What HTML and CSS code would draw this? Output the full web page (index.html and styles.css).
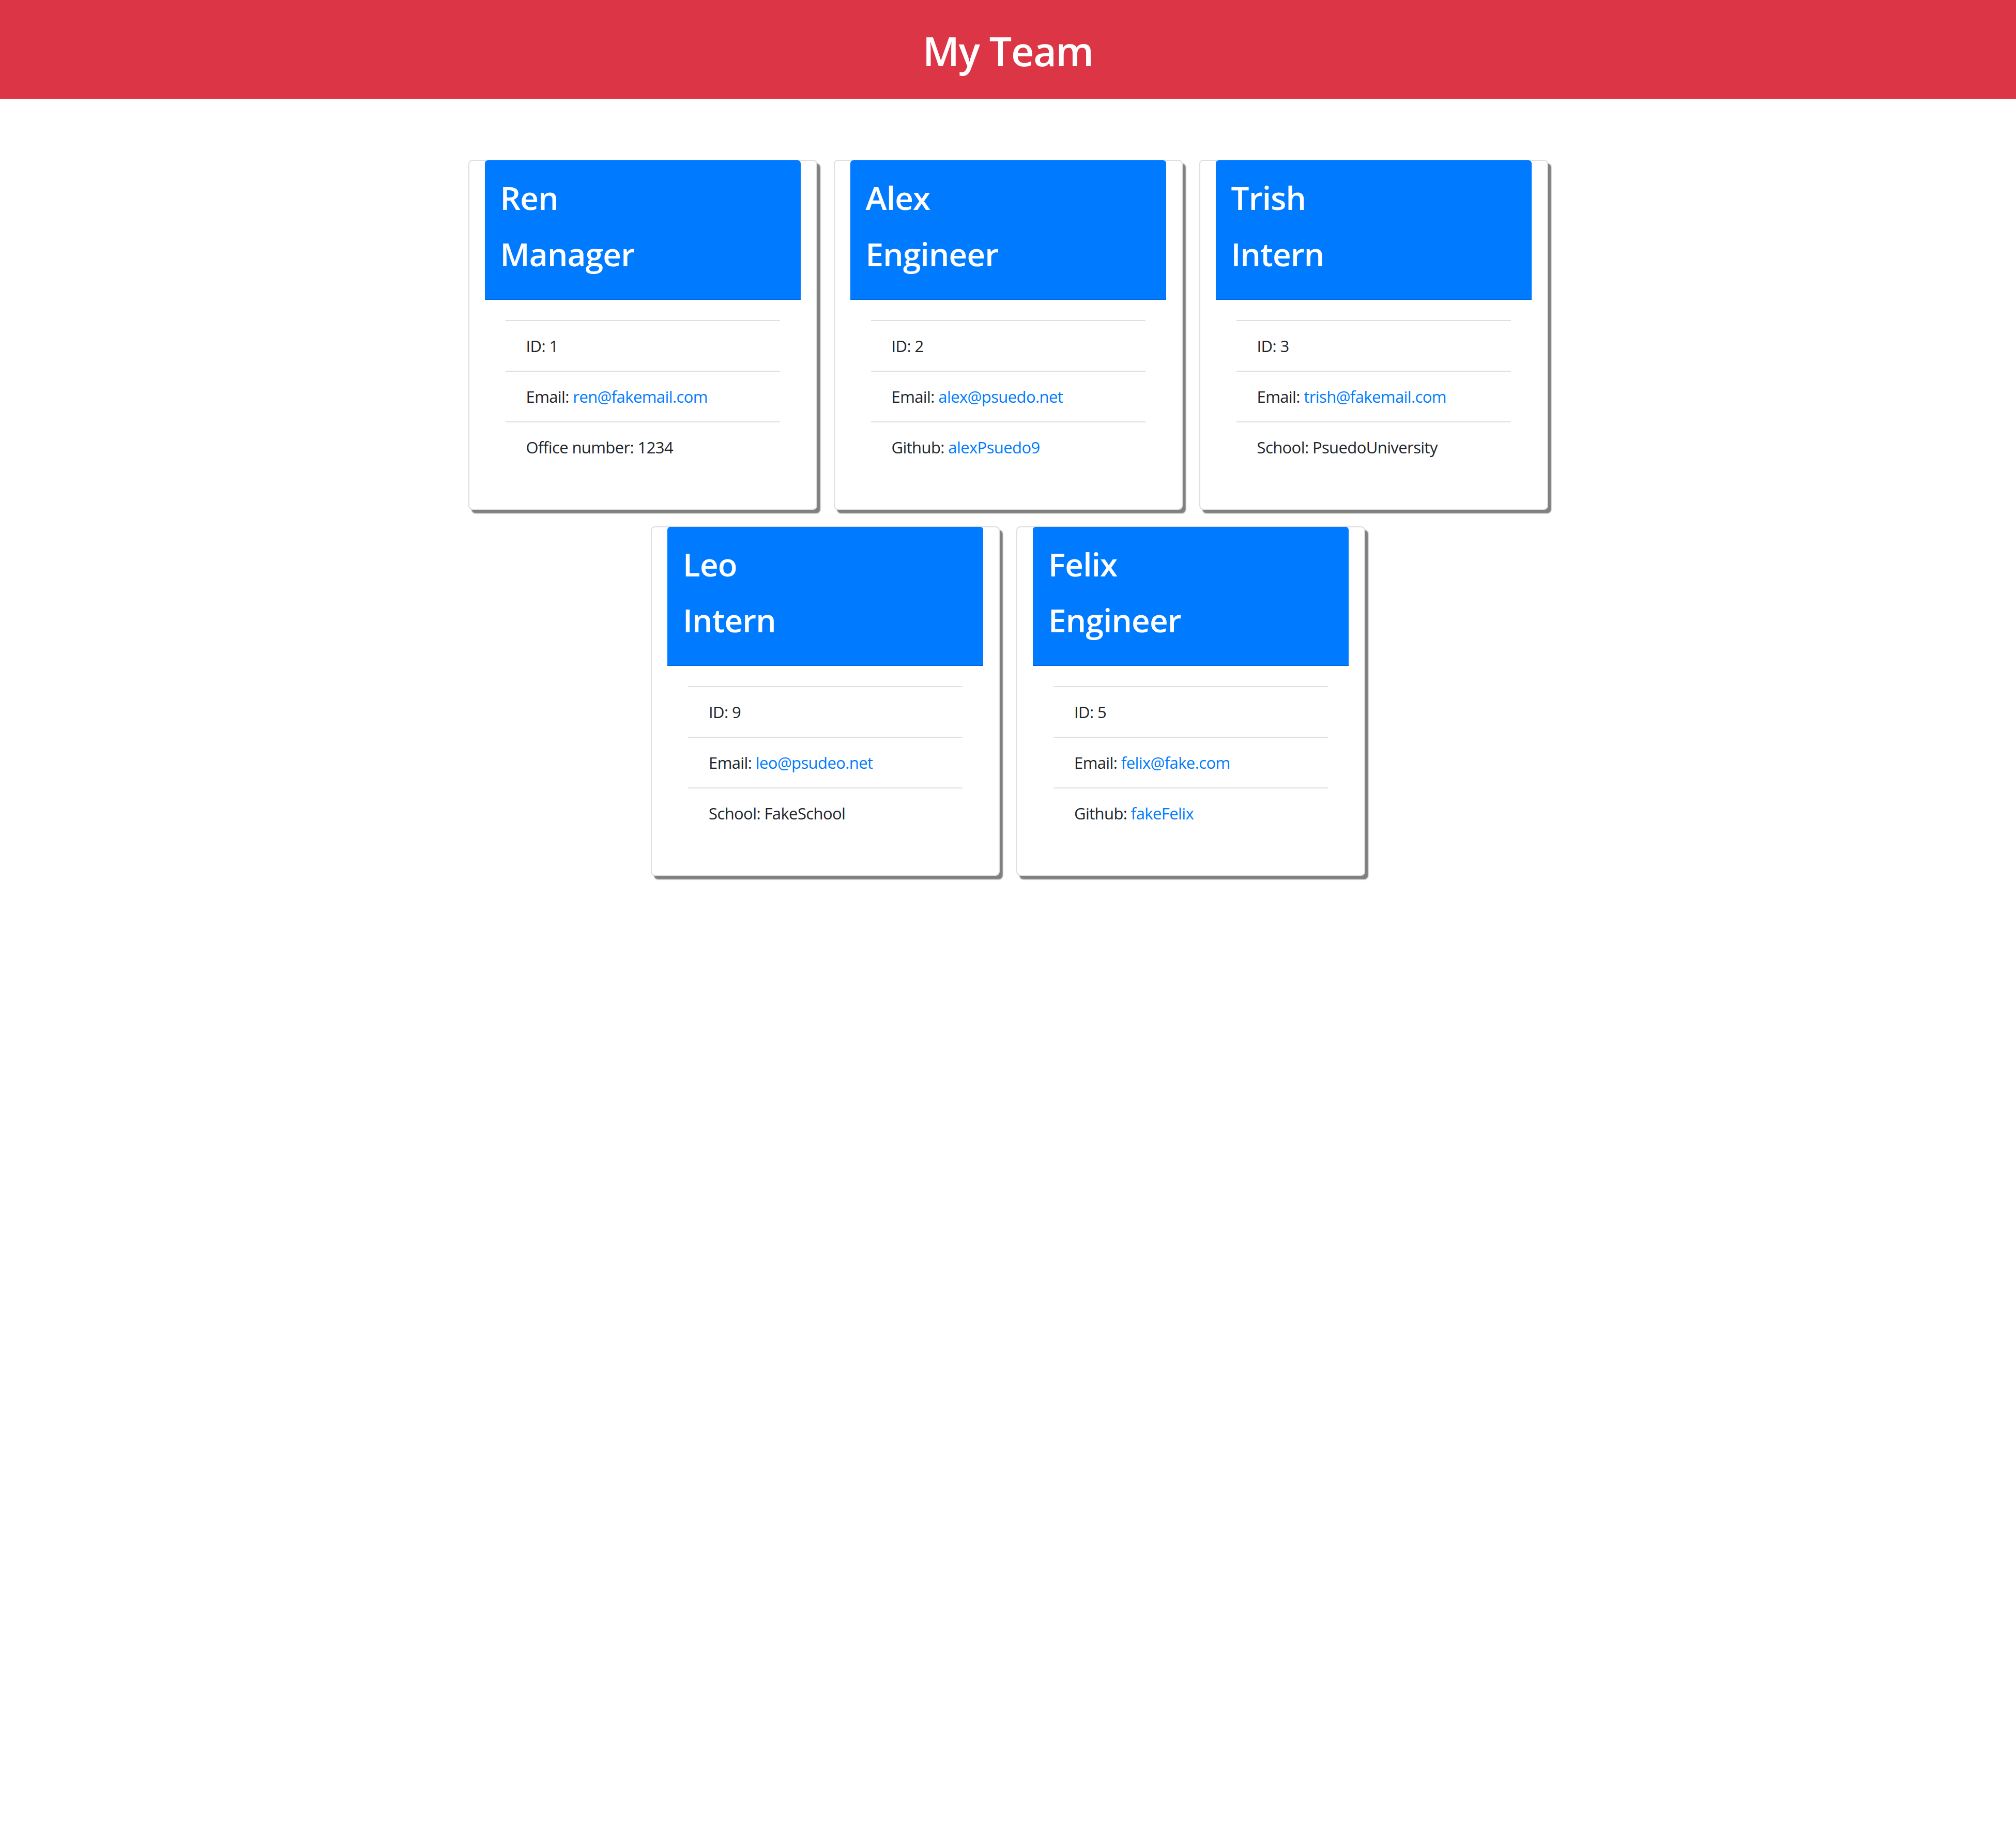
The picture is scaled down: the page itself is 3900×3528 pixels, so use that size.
FILE: index.html
```html
<!DOCTYPE html>
<html lang="en">
<head>
<meta charset="utf-8">
<title>My Team</title>
<link rel="stylesheet" href="styles.css">
</head>
<body>
<header class="topbar">
  <h1 class="topbar-title">My Team</h1>
</header>
<main class="team">
  <div class="card">
    <div class="card-head">
      <h2 class="card-name">Ren</h2>
      <h2 class="card-role">Manager</h2>
    </div>
    <ul class="card-list">
      <li class="card-item">ID: 1</li>
      <li class="card-item">Email: <a class="card-link" href="mailto:ren@fakemail.com">ren@fakemail.com</a></li>
      <li class="card-item">Office number: 1234</li>
    </ul>
  </div>
  <div class="card">
    <div class="card-head">
      <h2 class="card-name">Alex</h2>
      <h2 class="card-role">Engineer</h2>
    </div>
    <ul class="card-list">
      <li class="card-item">ID: 2</li>
      <li class="card-item">Email: <a class="card-link" href="mailto:alex@psuedo.net">alex@psuedo.net</a></li>
      <li class="card-item">Github: <a class="card-link" href="#">alexPsuedo9</a></li>
    </ul>
  </div>
  <div class="card">
    <div class="card-head">
      <h2 class="card-name">Trish</h2>
      <h2 class="card-role">Intern</h2>
    </div>
    <ul class="card-list">
      <li class="card-item">ID: 3</li>
      <li class="card-item">Email: <a class="card-link" href="mailto:trish@fakemail.com">trish@fakemail.com</a></li>
      <li class="card-item">School: PsuedoUniversity</li>
    </ul>
  </div>
  <div class="card">
    <div class="card-head">
      <h2 class="card-name">Leo</h2>
      <h2 class="card-role">Intern</h2>
    </div>
    <ul class="card-list">
      <li class="card-item">ID: 9</li>
      <li class="card-item">Email: <a class="card-link" href="mailto:leo@psudeo.net">leo@psudeo.net</a></li>
      <li class="card-item">School: FakeSchool</li>
    </ul>
  </div>
  <div class="card">
    <div class="card-head">
      <h2 class="card-name">Felix</h2>
      <h2 class="card-role">Engineer</h2>
    </div>
    <ul class="card-list">
      <li class="card-item">ID: 5</li>
      <li class="card-item">Email: <a class="card-link" href="mailto:felix@fake.com">felix@fake.com</a></li>
      <li class="card-item">Github: <a class="card-link" href="#">fakeFelix</a></li>
    </ul>
  </div>
</main>
</body>
</html>
```
FILE: styles.css
```css
* {
  box-sizing: border-box;
}

html, body {
  margin: 0;
  padding: 0;
  background: #ffffff;
}

body {
  font-family: "Open Sans", "Noto Sans", "Liberation Sans", sans-serif;
  color: #212529;
}

.topbar {
  background: #dc3545;
  height: 191px;
  display: flex;
  align-items: center;
  justify-content: center;
}

.topbar-title {
  margin: 0;
  color: #ffffff;
  font-size: 77px;
  font-weight: 600;
  line-height: 96px;
  letter-spacing: -1.2px;
  padding-top: 6px;
}

.team {
  width: 2121px;
  margin: 0 auto;
  padding-top: 102px;
  display: flex;
  flex-wrap: wrap;
  justify-content: center;
}

.card {
  width: 675px;
  margin: 16px;
  background: #ffffff;
  border: 2px solid rgba(0, 0, 0, 0.125);
  border-radius: 8px;
  box-shadow: 6px 7px 2px #808080;
}

.card-head {
  margin: -1px 30px 0;
  background: #007bff;
  border-radius: 6px 6px 0 0;
  border-bottom: 2px solid rgba(0, 0, 0, 0.125);
  padding: 34px 30px 16px;
  color: #ffffff;
}

.card-name,
.card-role {
  margin: 0 0 32px;
  font-size: 62px;
  font-weight: 600;
  line-height: 76.8px;
  letter-spacing: -0.8px;
}

.card-list {
  list-style: none;
  margin: 39px 70px 71px;
  padding: 0;
}

.card-item {
  border-top: 2px solid rgba(0, 0, 0, 0.125);
  padding: 24px 40px;
  font-size: 31px;
  line-height: 48px;
  letter-spacing: -0.6px;
}

.card-link {
  color: #007bff;
  text-decoration: none;
}
```
